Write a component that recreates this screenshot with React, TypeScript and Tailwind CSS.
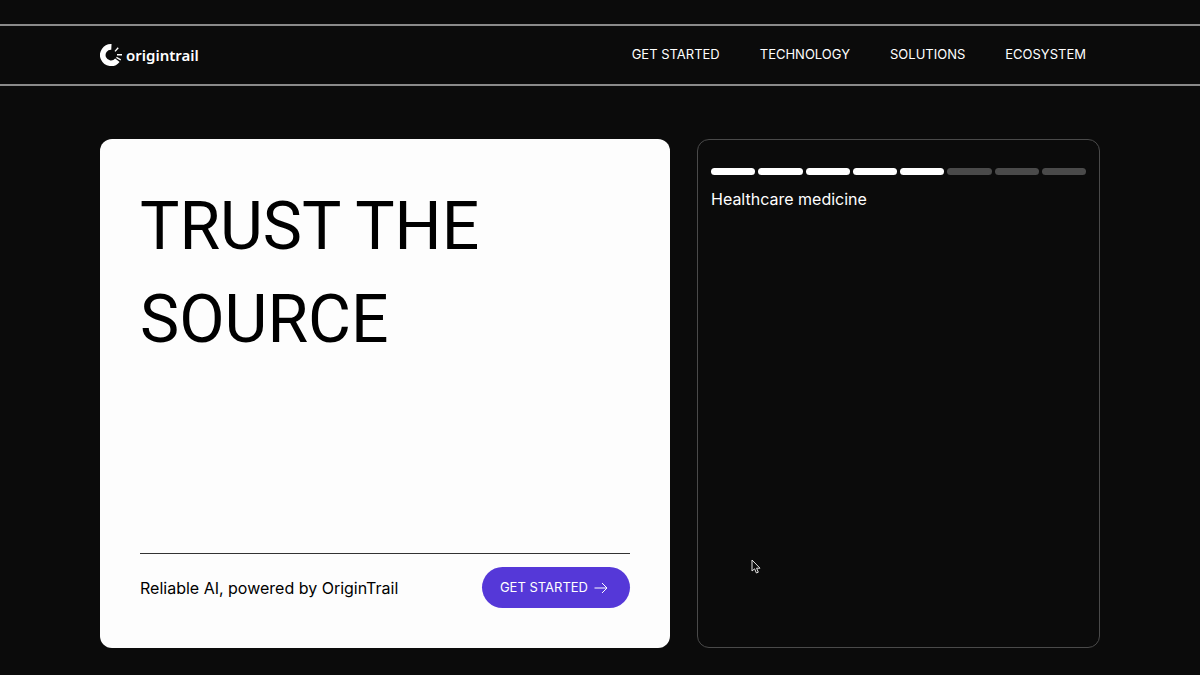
const navLinks = [
  { label: 'GET STARTED', href: '#get-started' },
  { label: 'TECHNOLOGY', href: '#technology' },
  { label: 'SOLUTIONS', href: '#solutions' },
  { label: 'ECOSYSTEM', href: '#ecosystem' },
];

const slideCount = 8;
const currentSlide = 5;

const Logo = () => (
  <a href="#home" className="flex items-center gap-1">
    <svg width="22" height="24" viewBox="0 0 22 24" fill="none" aria-hidden="true">
      <path d="M11.4 3.9A8.2 8.2 0 1 0 17.4 17.2" stroke="#fff" strokeWidth="5.6" />
      <path d="M15 8.4L18.2 4.8M17 11.8H22M16.4 14.4L20.8 16.8" stroke="#fff" strokeWidth="1.4" />
    </svg>
    <span className="font-['Noto_Sans',sans-serif] text-[15px] leading-6 font-semibold">origintrail</span>
  </a>
);

const Header = () => (
  <header className="mt-6 border-y-2 border-[#8a8a8a]">
    <div className="mx-auto flex h-[58px] max-w-[1000px] items-center justify-between pr-3.5">
      <Logo />
      <nav className="flex gap-10 text-[13px]">
        {navLinks.map((link) => (
          <a key={link.label} href={link.href}>
            {link.label}
          </a>
        ))}
      </nav>
    </div>
  </header>
);

const HeroCard = () => (
  <section className="flex flex-col rounded-xl bg-[#fdfdfd] px-10 pt-[41px] pb-10 text-black">
    <h1 className="font-[Roboto,sans-serif] text-[66px] leading-[93px]">
      TRUST THE
      <br />
      SOURCE
    </h1>
    <div className="mt-auto flex items-center justify-between border-t border-[#333] pt-[13px]">
      <p className="text-base">Reliable AI, powered by OriginTrail</p>
      <button
        type="button"
        className="flex h-[41px] items-center gap-1.5 rounded-full bg-[#5538d8] pr-[22px] pl-[18px] text-[13px] text-white"
      >
        GET STARTED
        <svg width="14" height="12" viewBox="0 0 14 12" fill="none" stroke="currentColor" aria-hidden="true">
          <path d="M0.5 6H13M8 1L13 6L8 11" />
        </svg>
      </button>
    </div>
  </section>
);

const SlideCard = () => (
  <section className="rounded-xl border border-[#4a4a4a] px-[13px] pt-7">
    <div className="flex gap-[3px]">
      {Array.from({ length: slideCount }, (_, i) => (
        <span
          key={i}
          className={`h-[7px] flex-1 rounded-full ${i < currentSlide ? 'bg-white' : 'bg-[#4a4a4a]'}`}
        />
      ))}
    </div>
    <h2 className="mt-3 text-base">Healthcare medicine</h2>
  </section>
);

const App = () => {
  return (
    <div className="relative flex min-h-screen flex-col bg-[#0b0b0b] font-[Inter,sans-serif] text-white">
      <Header />

      <main className="mx-auto grid w-full max-w-[1000px] flex-1 grid-cols-[570fr_403fr] gap-[27px] pt-[53px] pb-[27px]">
        <HeroCard />
        <SlideCard />
      </main>

      {/* Pointer */}
      <svg
        className="absolute top-[559px] left-[751px]"
        width="10"
        height="16"
        viewBox="0 0 10 16"
        fill="#0b0b0b"
        stroke="#e5e5e5"
        aria-hidden="true"
      >
        <path d="M1 1V12L3.6 9.8L5.4 14L7.3 13.2L5.6 9.2H9Z" />
      </svg>
    </div>
  );
};

export default App;
